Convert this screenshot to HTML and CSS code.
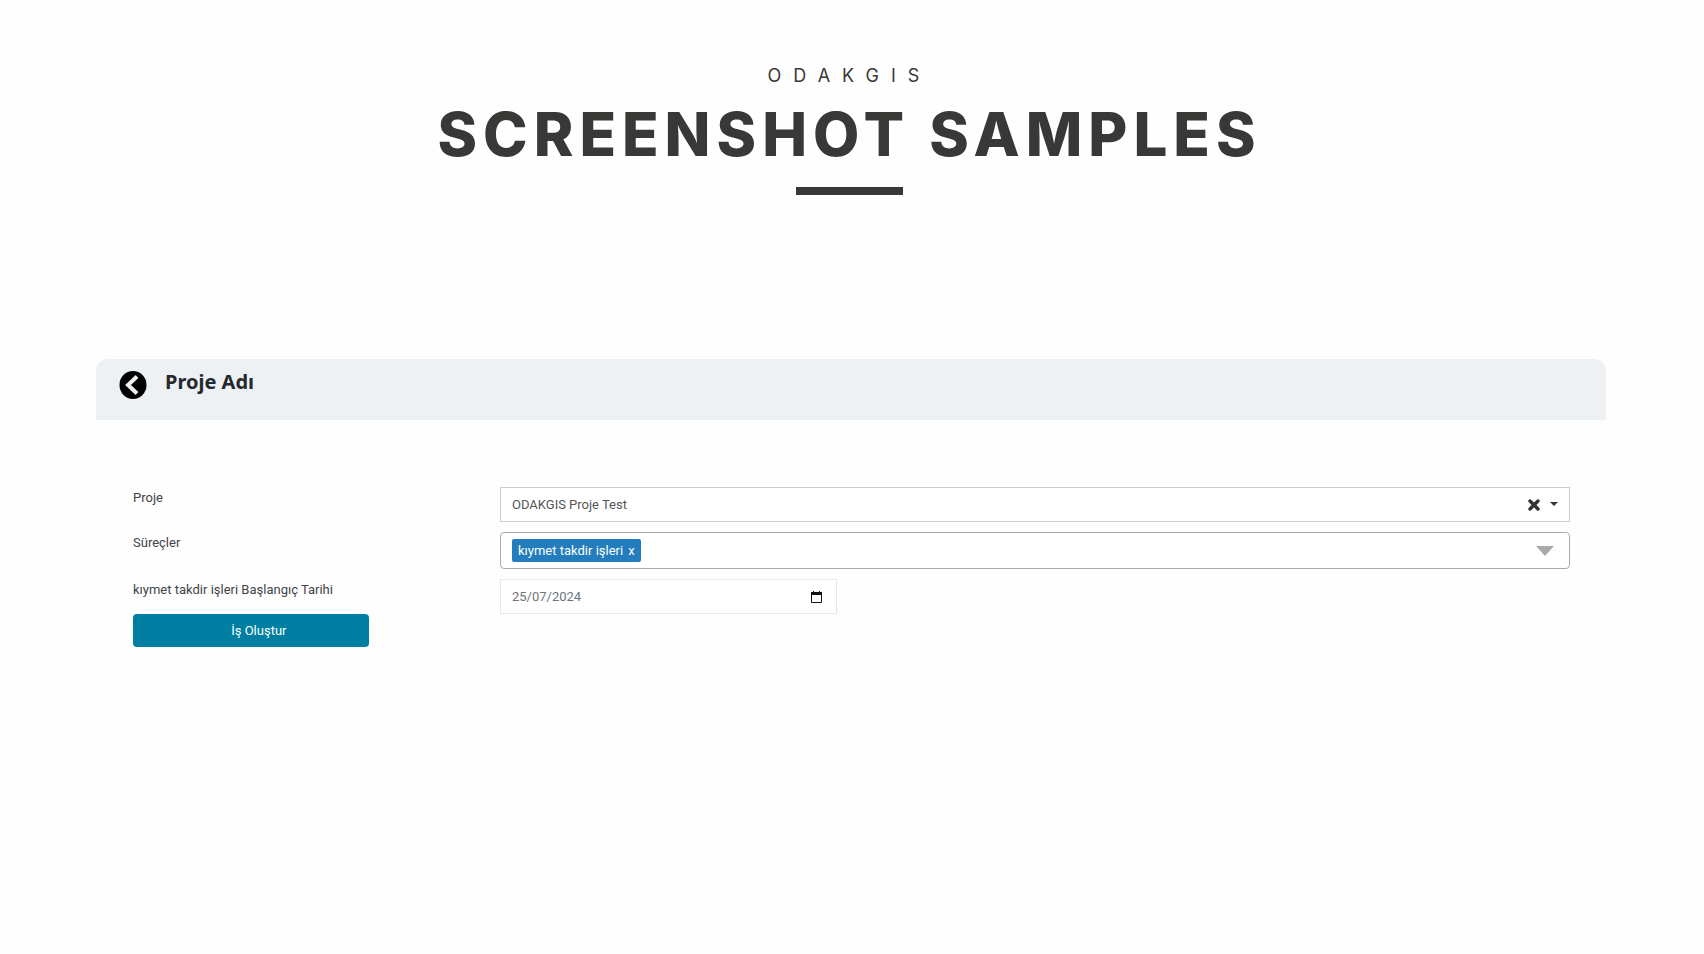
FILE: index.html
```html
<!DOCTYPE html>
<html lang="tr">
<head>
<meta charset="utf-8">
<meta name="viewport" content="width=device-width, initial-scale=1">
<title>ODAKGIS</title>
<link rel="stylesheet" href="styles.css">
</head>
<body>
<header class="hero">
  <p class="hero-brand">ODAKGIS</p>
  <h1 class="hero-title" lang="en">SCREENSHOT SAMPLES</h1>
  <hr class="hero-rule">
</header>
<main class="panel">
  <div class="panel-head">
    <button class="back" type="button" aria-label="Geri">
      <svg width="28" height="28" viewBox="0 0 28 28" aria-hidden="true"><ellipse cx="14" cy="14" rx="13.5" ry="14"/><path d="M18 5.5 L9 14 L18 22.5" fill="none" stroke="#edf1f4" stroke-width="4"/></svg>
    </button>
    <h2 class="panel-title">Proje Adı</h2>
  </div>
  <form class="form">
    <div class="row">
      <label class="label" for="project">Proje</label>
      <div class="field">
        <select class="project" id="project"><option>ODAKGIS Proje Test</option></select>
        <button class="clear" type="button" aria-label="Temizle">
          <svg width="12" height="12" viewBox="0 0 12 12" aria-hidden="true"><path d="M2 2 L10 10 M10 2 L2 10" stroke="#333" stroke-width="3.4" stroke-linecap="round"/></svg>
        </button>
        <svg class="caret" width="8" height="4" viewBox="0 0 8 4" aria-hidden="true"><path d="M0 0H8L4 4Z" fill="#333"/></svg>
      </div>
    </div>
    <div class="row">
      <span class="label" id="steps-label">Süreçler</span>
      <div class="field field-tags" role="group" aria-labelledby="steps-label">
        <span class="tag">kıymet takdir işleri <button class="tag-remove" type="button" aria-label="Kaldır">x</button></span>
        <button class="open" type="button" aria-label="Aç">
          <svg width="18" height="10" viewBox="0 0 18 10" aria-hidden="true"><path d="M0 0H18L9 10Z" fill="#aaa"/></svg>
        </button>
      </div>
    </div>
    <div class="row">
      <label class="label" for="start">kıymet takdir işleri Başlangıç Tarihi</label>
      <div class="field field-date">
        <input class="date" id="start" type="text" value="25/07/2024">
        <button class="calendar" type="button" aria-label="Takvim">
          <svg width="11" height="12" viewBox="0 0 11 12" aria-hidden="true"><path d="M.5 1.5H10.5V11.5H.5Z" fill="none" stroke="#111"/><path d="M0 1H11V4H0ZM2 0H3V2H2ZM8 0H9V2H8Z" fill="#111"/></svg>
        </button>
      </div>
    </div>
    <button class="submit" type="submit">İş Oluştur</button>
  </form>
</main>
</body>
</html>
```

FILE: styles.css
```css
* {
  box-sizing: border-box;
}

body {
  margin: 0;
  background: #fefefe;
  color: #3f4448;
  font: 13px/22px Roboto, "Noto Sans", sans-serif;
}

button,
input,
select {
  font: inherit;
  margin: 0;
  padding: 0;
  border: 0;
  background: none;
}

button {
  display: flex;
  align-items: center;
  justify-content: center;
  cursor: pointer;
}

.hero {
  display: flex;
  flex-direction: column;
  align-items: center;
  padding: 64px 5px 0 0;
  color: #383837;
  font-family: Inter, sans-serif;
}

.hero-brand {
  margin: 0;
  font-size: 18px;
  line-height: 24px;
  letter-spacing: 12px;
}

.hero-title {
  margin: 10px 0 0;
  font-size: 60px;
  font-weight: 800;
  line-height: 72px;
  letter-spacing: 6px;
}

.hero-rule {
  width: 107px;
  height: 8px;
  margin: 17px 0 0;
  border: 0;
  background: #383837;
}

.panel {
  margin: 164px 98px 0 96px;
}

.panel-head {
  display: flex;
  gap: 18px;
  height: 61px;
  padding: 0 23px;
  border-radius: 12px 12px 0 0;
  background: #edf1f4;
}

.back {
  width: 28px;
  height: 28px;
  margin-top: 12px;
}

.panel-title {
  margin: 8px 0 0;
  color: #24292d;
  font-family: "Noto Sans", sans-serif;
  font-size: 20px;
  font-weight: 700;
  line-height: 30px;
}

.form {
  padding: 67px 36px 0 37px;
}

.row {
  display: grid;
  grid-template-columns: 367px 1fr;
  align-items: start;
  margin-bottom: 10px;
}

.row:last-of-type {
  margin-bottom: 0;
}

.field {
  position: relative;
  display: flex;
  align-items: center;
  height: 35px;
  border: 1px solid #ccc;
  background: #fff;
  color: #555;
}

.project {
  flex: 1;
  height: 100%;
  padding: 0 52px 0 11px;
  appearance: none;
  color: inherit;
}

.clear {
  position: absolute;
  right: 29px;
}

.caret {
  position: absolute;
  right: 11px;
  top: 14px;
}

.field-tags {
  justify-content: space-between;
  height: 37px;
  padding: 0 15px 0 11px;
  border-color: #aaa;
  border-radius: 4px;
}

.tag {
  display: flex;
  gap: 5px;
  padding: 0 6px;
  border-radius: 2px;
  background: #237dbd;
  color: #fff;
  line-height: 23px;
}

.tag-remove {
  color: inherit;
}

.field-date {
  width: 31.5%;
  padding: 0 14px 0 11px;
  border-color: #e4e8eb;
}

.date {
  flex: 1;
  min-width: 0;
  color: #6e757c;
}

.submit {
  width: 16.4%;
  height: 33px;
  padding-left: 16px;
  border-radius: 4px;
  background: #007fa3;
  color: #fff;
}
```
